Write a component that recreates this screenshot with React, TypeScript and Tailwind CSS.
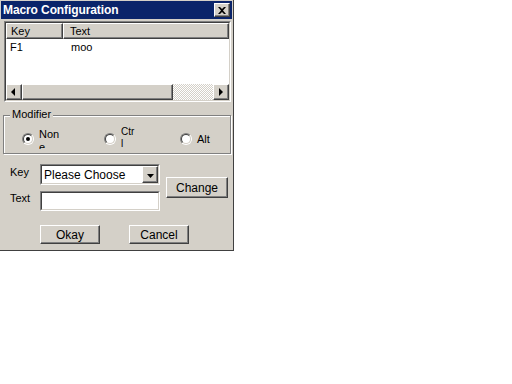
import React from "react";

const raised =
  "border border-t-white border-l-white border-r-[#404040] border-b-[#404040] shadow-[inset_-1px_-1px_0_#808080]";

function Radio({ checked }: { checked?: boolean }) {
  return (
    <div className="w-[12px] h-[12px] shrink-0 rounded-full border border-t-[#808080] border-l-[#808080] border-r-white border-b-white">
      <div className="w-full h-full rounded-full border border-t-[#404040] border-l-[#404040] border-r-[#d4d0c8] border-b-[#d4d0c8] bg-white flex items-center justify-center">
        {checked && <div className="w-[4px] h-[4px] rounded-full bg-black" />}
      </div>
    </div>
  );
}

function Arrow({ dir }: { dir: "left" | "right" | "down" }) {
  const pts =
    dir === "left" ? "6,4 6,12 2,8" : dir === "right" ? "6,4 6,12 10,8" : "4,6 11,6 7.5,10";
  return (
    <svg width="14" height="14" viewBox="0 0 14 14">
      <polygon points={pts} fill="#000" transform={dir === "left" ? "translate(2 -1)" : dir === "right" ? "translate(-1 -1)" : ""} />
    </svg>
  );
}

export default function App() {
  return (
    <div
      className="w-[512px] h-[384px] bg-white relative"
      style={{ fontFamily: '"Liberation Sans", Arial, sans-serif' }}
    >
      <div className="w-[234px] h-[251px] bg-[#d4d0c8] border-r border-b border-r-[#404040] border-b-[#404040] flex flex-col text-[11px] text-black leading-none">
        {/* title bar */}
        <div className="mt-px ml-px mr-px h-[18px] bg-[#0a246a] flex items-center justify-between pl-[2px] pr-[2px]">
          <span className="text-white font-bold text-[12px] tracking-[-0.1px]">Macro Configuration</span>
          <div className={`w-[16px] h-[14px] bg-[#d4d0c8] ${raised} flex items-center justify-center`}>
            <svg width="8" height="7" viewBox="0 0 8 7">
              <path d="M0 0 L2 0 L4 2 L6 0 L8 0 L5 3.5 L8 7 L6 7 L4 5 L2 7 L0 7 L3 3.5 Z" fill="#000" />
            </svg>
          </div>
        </div>

        {/* list view */}
        <div className="mt-[2px] ml-[4px] w-[227px] h-[81px] border border-t-[#808080] border-l-[#808080] border-r-white border-b-white">
          <div className="w-full h-full border border-t-[#404040] border-l-[#404040] border-r-[#d4d0c8] border-b-[#d4d0c8] bg-white flex flex-col">
            <div className="flex h-[16px] shrink-0">
              <div className={`w-[57px] h-full bg-[#d4d0c8] ${raised} pl-[4px] flex items-center`}>Key</div>
              <div className={`flex-1 h-full bg-[#d4d0c8] ${raised} pl-[6px] flex items-center`}>Text</div>
            </div>
            <div className="flex h-[14px] items-center mt-[1px]">
              <span className="w-[59px] pl-[4px]">F1</span>
              <span className="pl-[6px]">moo</span>
            </div>
            <div className="flex-1" />
            <div className="flex h-[16px] shrink-0">
              <div className={`w-[16px] h-full bg-[#d4d0c8] ${raised} flex items-center justify-center`}>
                <Arrow dir="left" />
              </div>
              <div className={`w-[151px] h-full bg-[#d4d0c8] ${raised}`} />
              <div className="flex-1 h-full bg-[repeating-conic-gradient(#ffffff_0_25%,#d4d0c8_0_50%)] bg-[length:2px_2px]" />
              <div className={`w-[16px] h-full bg-[#d4d0c8] ${raised} flex items-center justify-center`}>
                <Arrow dir="right" />
              </div>
            </div>
          </div>
        </div>

        {/* modifier group */}
        <div className="relative mt-[13px] ml-[3px] w-[228px] h-[39px] border border-[#808080] shadow-[1px_1px_0_#fff,inset_1px_1px_0_#fff]">
          <span className="absolute -top-[7px] left-[6px] bg-[#d4d0c8] px-[2px]">Modifier</span>
          <div className="flex items-start pt-[12px] pl-[18px]">
            <div className="flex items-start w-[82px]">
              <div className="mt-[5px]">
                <Radio checked />
              </div>
              <div className="ml-[5px] w-[20px] h-[21px] overflow-hidden leading-[13px]">Non e</div>
            </div>
            <div className="flex items-start w-[76px]">
              <div className="mt-[5px]">
                <Radio />
              </div>
              <div className="ml-[5px] w-[14px] h-[21px] overflow-hidden leading-[12px] -mt-[2px] text-[10px]">Ctr l</div>
            </div>
            <div className="flex items-center">
              <div className="mt-[5px] flex items-center">
                <Radio />
                <span className="ml-[5px]">Alt</span>
              </div>
            </div>
          </div>
        </div>

        {/* key / text rows */}
        <div className="flex mt-[10px] ml-[10px]">
          <div className="flex flex-col">
            <div className="flex items-start h-[22px]">
              <span className="w-[30px] mt-[3px]">Key</span>
              <div className="w-[120px] h-[21px] border border-t-[#808080] border-l-[#808080] border-r-white border-b-white">
                <div className="w-full h-full border border-t-[#404040] border-l-[#404040] border-r-[#d4d0c8] border-b-[#d4d0c8] bg-white flex items-center">
                  <span className="flex-1 pl-[2px] text-[12px]">Please Choose</span>
                  <div className={`w-[16px] h-[17px] bg-[#d4d0c8] ${raised} flex items-center justify-center`}>
                    <Arrow dir="down" />
                  </div>
                </div>
              </div>
            </div>
            <div className="flex items-start mt-[5px]">
              <span className="w-[30px] mt-[2px]">Text</span>
              <div className="w-[120px] h-[20px] border border-t-[#808080] border-l-[#808080] border-r-white border-b-white">
                <div className="w-full h-full border border-t-[#404040] border-l-[#404040] border-r-[#d4d0c8] border-b-[#d4d0c8] bg-white" />
              </div>
            </div>
          </div>
          <div className={`ml-[6px] mt-[13px] w-[62px] h-[21px] bg-[#d4d0c8] ${raised} flex items-center justify-center text-[12px]`}>
            Change
          </div>
        </div>

        {/* buttons */}
        <div className="flex mt-[14px] ml-[40px] gap-[29px]">
          <div className={`w-[60px] h-[19px] bg-[#d4d0c8] ${raised} flex items-center justify-center text-[12px]`}>Okay</div>
          <div className={`w-[60px] h-[19px] bg-[#d4d0c8] ${raised} flex items-center justify-center text-[12px]`}>Cancel</div>
        </div>
      </div>
    </div>
  );
}
